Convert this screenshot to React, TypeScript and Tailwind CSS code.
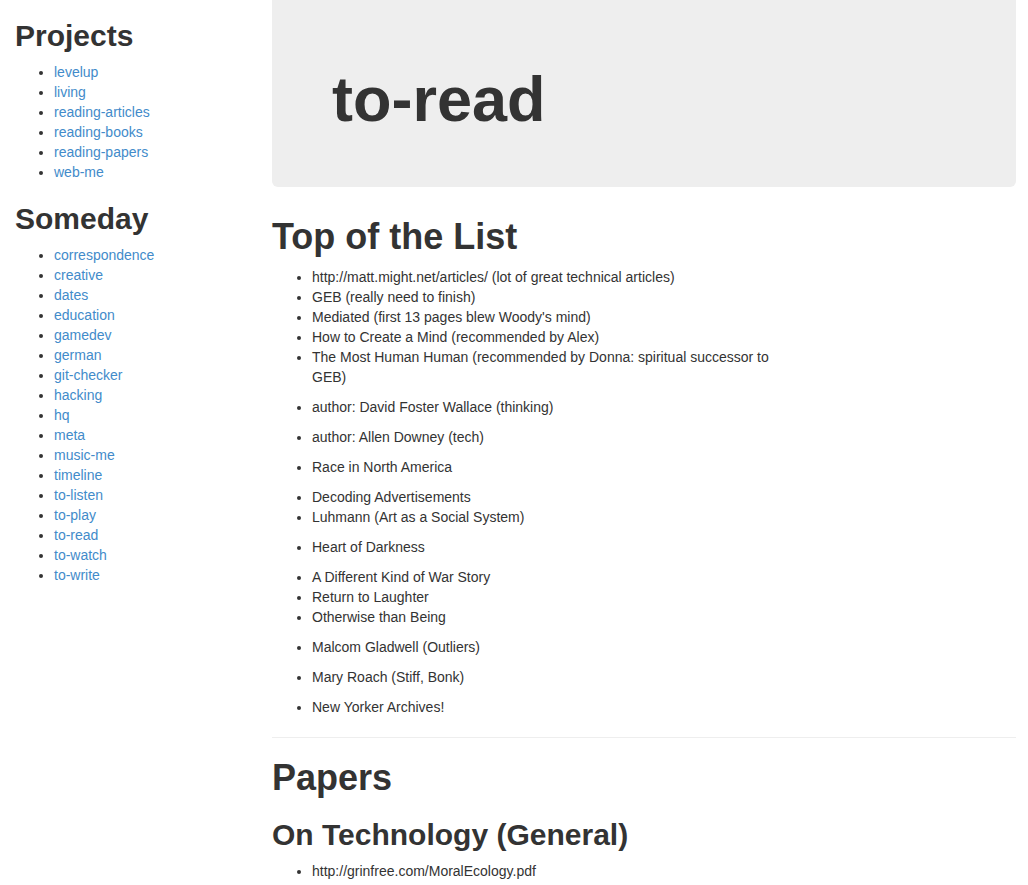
import React from "react";

interface Item {
  text: string;
  loose?: boolean;
}

const projects = ["levelup", "living", "reading-articles", "reading-books", "reading-papers", "web-me"];

const someday = [
  "correspondence",
  "creative",
  "dates",
  "education",
  "gamedev",
  "german",
  "git-checker",
  "hacking",
  "hq",
  "meta",
  "music-me",
  "timeline",
  "to-listen",
  "to-play",
  "to-read",
  "to-watch",
  "to-write",
];

// loose items are followed by a 10px gap, like markdown paragraphs in a list
const topOfList: Item[] = [
  { text: "http://matt.might.net/articles/ (lot of great technical articles)" },
  { text: "GEB (really need to finish)" },
  { text: "Mediated (first 13 pages blew Woody's mind)" },
  { text: "How to Create a Mind (recommended by Alex)" },
  { text: "The Most Human Human (recommended by Donna: spiritual successor to GEB)", loose: true },
  { text: "author: David Foster Wallace (thinking)", loose: true },
  { text: "author: Allen Downey (tech)", loose: true },
  { text: "Race in North America", loose: true },
  { text: "Decoding Advertisements" },
  { text: "Luhmann (Art as a Social System)", loose: true },
  { text: "Heart of Darkness", loose: true },
  { text: "A Different Kind of War Story" },
  { text: "Return to Laughter" },
  { text: "Otherwise than Being", loose: true },
  { text: "Malcom Gladwell (Outliers)", loose: true },
  { text: "Mary Roach (Stiff, Bonk)", loose: true },
  { text: "New Yorker Archives!" },
];

const papers = ["http://grinfree.com/MoralEcology.pdf", "http://www.cs.yale.edu/homes/perlis-alan/quotes.html"];

function SideList({ items }: { items: string[] }) {
  return (
    <ul className="mt-[10px] list-disc pl-[39px]">
      {items.map((name) => (
        <li key={name} className="leading-[20px]">
          <a href="#" className="text-[#428bca] no-underline">
            {name}
          </a>
        </li>
      ))}
    </ul>
  );
}

export default function App() {
  return (
    <div
      className="flex min-h-[885px] bg-white text-[14px] leading-[20px] text-[#333333]"
      style={{ fontFamily: '"Liberation Sans", Arial, sans-serif' }}
    >
      {/* Sidebar */}
      <div className="w-[257px] shrink-0 px-[15px]">
        <h2 className="mt-[19px] text-[30px] leading-[33px] font-bold">Projects</h2>
        <SideList items={projects} />
        <h2 className="mt-[20px] text-[30px] leading-[33px] font-bold">Someday</h2>
        <SideList items={someday} />
      </div>

      {/* Main */}
      <div className="flex-1 pl-[15px] pr-[12px]">
        <div className="rounded-b-[6px] bg-[#eeeeee] px-[60px] pt-[65px] pb-[53px]">
          <h1 className="text-[63px] leading-[69px] font-bold">to-read</h1>
        </div>

        <h1 className="mt-[30px] text-[36px] leading-[40px] font-bold">Top of the List</h1>
        <ul className="mt-[10px] w-[520px] list-disc pl-[40px]">
          {topOfList.map((item) => (
            <li key={item.text} className={item.loose ? "mb-[10px] leading-[20px]" : "leading-[20px]"}>
              {item.text}
            </li>
          ))}
        </ul>

        <hr className="mt-[20px] border-t border-[#eeeeee]" />

        <h1 className="mt-[20px] text-[36px] leading-[40px] font-bold">Papers</h1>
        <h2 className="mt-[20px] text-[30px] leading-[33px] font-bold">On Technology (General)</h2>
        <ul className="mt-[10px] list-disc pl-[40px]">
          {papers.map((p) => (
            <li key={p} className="leading-[20px]">
              {p}
            </li>
          ))}
        </ul>
      </div>
    </div>
  );
}
